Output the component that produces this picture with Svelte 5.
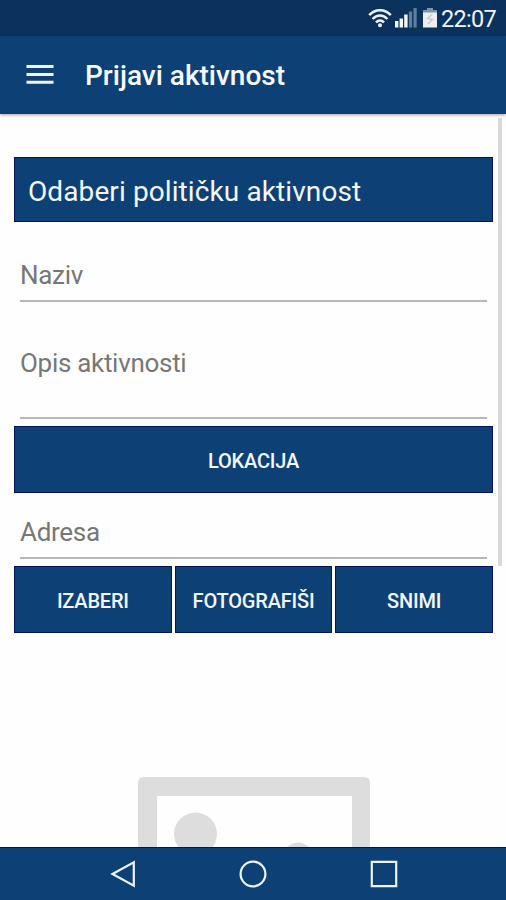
<script lang="ts">
  const photoActions = [
    { id: 'pick', label: 'IZABERI' },
    { id: 'capture', label: 'FOTOGRAFIŠI' },
    { id: 'save', label: 'SNIMI' }
  ];
</script>

<div class="screen">
  <div class="status-bar">
    <svg class="wifi" width="24" height="20" viewBox="0 0 24 20" fill="none" stroke="#eef3ff" stroke-width="2.5">
      <path d="M1.2 7.2C7.3 .6 16.7 .6 22.8 7.2" />
      <path d="M4.6 11C9 6.4 15 6.4 19.4 11" />
      <path d="M8 14.4C10.5 11.8 13.5 11.8 16 14.4" />
      <circle cx="12" cy="17.2" r="2" fill="#eef3ff" stroke="none" />
    </svg>
    <svg class="signal" width="22" height="20" viewBox="0 0 22 20">
      <path d="M0 13h3.4v6.5H0zM4.6 10.5h3.4v9H4.6zM9.2 6.5h3.4v13H9.2z" fill="#f4f7ff" />
      <path d="M13.9 3.5h3.2v16h-3.2zM18.5 0h3.2v19.5h-3.2z" fill="#5f7f9f" />
    </svg>
    <svg class="battery" width="14" height="20" viewBox="0 0 14 20">
      <path d="M4 0h6v2h4v3H0V2h4z" fill="#7d94ab" />
      <path d="M0 4.5h14v15H0z" fill="#eeeef0" />
      <path d="M9 6.5L4.5 10.5l5 1L5 16" fill="none" stroke="#c6c9ce" stroke-width="1.3" />
    </svg>
    <span class="clock">22:07</span>
  </div>

  <header class="toolbar">
    <button type="button" class="menu" aria-label="Meni">
      <svg width="28" height="20" viewBox="0 0 28 20">
        <path d="M.5 2.5h27M.5 10.5h27M.5 18.3h27" stroke="#f2f3ff" stroke-width="3" />
      </svg>
    </button>
    <h1>Prijavi aktivnost</h1>
  </header>

  <main>
    <div class="form">
      <button type="button" class="block spinner">Odaberi političku aktivnost</button>
      <div class="field name"><span>Naziv</span></div>
      <div class="field description"><span>Opis aktivnosti</span></div>
      <button type="button" class="block location">LOKACIJA</button>
      <div class="field address"><span>Adresa</span></div>
      <div class="actions">
        {#each photoActions as action (action.id)}
          <button type="button" class="block">{action.label}</button>
        {/each}
      </div>
      <svg class="preview" width="232" height="70" viewBox="0 0 232 70">
        <path d="M0 70V6Q0 0 6 0H226Q232 0 232 6V70H214V19H19V70z" fill="#ddd" />
        <circle cx="57.5" cy="57" r="21.5" fill="#ddd" />
        <path d="M149 70Q160 61 171 70z" fill="#ddd" />
      </svg>
    </div>
    <div class="scrollbar"></div>
  </main>

  <nav class="nav-bar">
    <svg width="26" height="28" viewBox="0 0 26 28">
      <path d="M2.5 14L23.8 2.3V25.7z" />
    </svg>
    <svg width="28" height="28" viewBox="0 0 28 28">
      <circle cx="14" cy="14" r="12.4" />
    </svg>
    <svg width="28" height="28" viewBox="0 0 28 28">
      <path d="M1.8 1.8h24.4v24.4H1.8z" />
    </svg>
  </nav>
</div>

<style>
  :global(body) {
    margin: 0;
    background: #fefefe;
  }

  .screen {
    width: 506px;
    height: 900px;
    display: flex;
    flex-direction: column;
    overflow: hidden;
    font-family: Roboto, "Liberation Sans", sans-serif;
    background: #fefefe;
  }

  svg {
    display: block;
    flex-shrink: 0;
  }

  button {
    margin: 0;
    padding: 0;
    border: none;
    background: none;
    font-family: inherit;
  }

  .status-bar {
    height: 36px;
    flex-shrink: 0;
    box-sizing: border-box;
    padding-right: 10px;
    display: flex;
    align-items: center;
    justify-content: flex-end;
    background: #0a325c;
    color: #f1f4ff;
  }

  .signal {
    margin-left: 3px;
  }

  .battery {
    margin-left: 6px;
  }

  .clock {
    width: 55px;
    margin-left: 4px;
    padding-top: 2px;
    font-size: 23.5px;
    line-height: 28px;
    letter-spacing: -0.7px;
    white-space: nowrap;
  }

  .toolbar {
    height: 78px;
    flex-shrink: 0;
    display: flex;
    align-items: center;
    padding-left: 26px;
    background: #0d4175;
    box-shadow: 0 1px 3px rgba(30, 10, 40, 0.4);
  }

  .menu svg {
    margin-bottom: 2px;
  }

  h1 {
    margin: 2px 0 0 31px;
    font-size: 28px;
    line-height: 32px;
    font-weight: 500;
    color: #f8f9ff;
    white-space: nowrap;
  }

  main {
    flex: 1;
    min-height: 0;
    display: flex;
    overflow: hidden;
    padding: 0 4px 0 14px;
    justify-content: space-between;
  }

  .form {
    width: 479px;
    padding-top: 43px;
    display: flex;
    flex-direction: column;
  }

  .block {
    height: 67px;
    box-sizing: border-box;
    flex-shrink: 0;
    padding: 2px 0 0;
    border: 1px solid #05135f;
    background: #0d4175;
    color: #f5f7ff;
    font-size: 20px;
    font-weight: 500;
    letter-spacing: -0.2px;
    white-space: nowrap;
  }

  .spinner {
    height: 65px;
    padding: 3px 0 0 13px;
    font-size: 28px;
    font-weight: 400;
    letter-spacing: 0.1px;
    text-align: left;
  }

  .field {
    box-sizing: border-box;
    flex-shrink: 0;
    margin: 0 6px;
    border-bottom: 2px solid #b8b8b8;
    color: #777;
    font-size: 26px;
    line-height: 32px;
    letter-spacing: -0.3px;
  }

  .name {
    height: 80px;
    padding-top: 37px;
  }

  .description {
    height: 117px;
    padding-top: 45px;
  }

  .location {
    margin-top: 7px;
  }

  .address {
    height: 66px;
    padding-top: 23px;
  }

  .actions {
    margin-top: 7px;
    display: grid;
    grid-template-columns: repeat(3, 1fr);
    gap: 3px;
  }

  .preview {
    margin: 144px 0 0 124px;
  }

  .scrollbar {
    width: 4px;
    height: 448px;
    margin-top: 4px;
    background: #d9d9d9;
  }

  .nav-bar {
    height: 53px;
    flex-shrink: 0;
    box-sizing: border-box;
    border-top: 1px solid #05135f;
    padding: 0 108px 0 110px;
    display: flex;
    align-items: center;
    justify-content: space-between;
    background: #0d4175;
  }

  .nav-bar svg {
    fill: none;
    stroke: #edf2ff;
    stroke-width: 2.2;
  }
</style>
